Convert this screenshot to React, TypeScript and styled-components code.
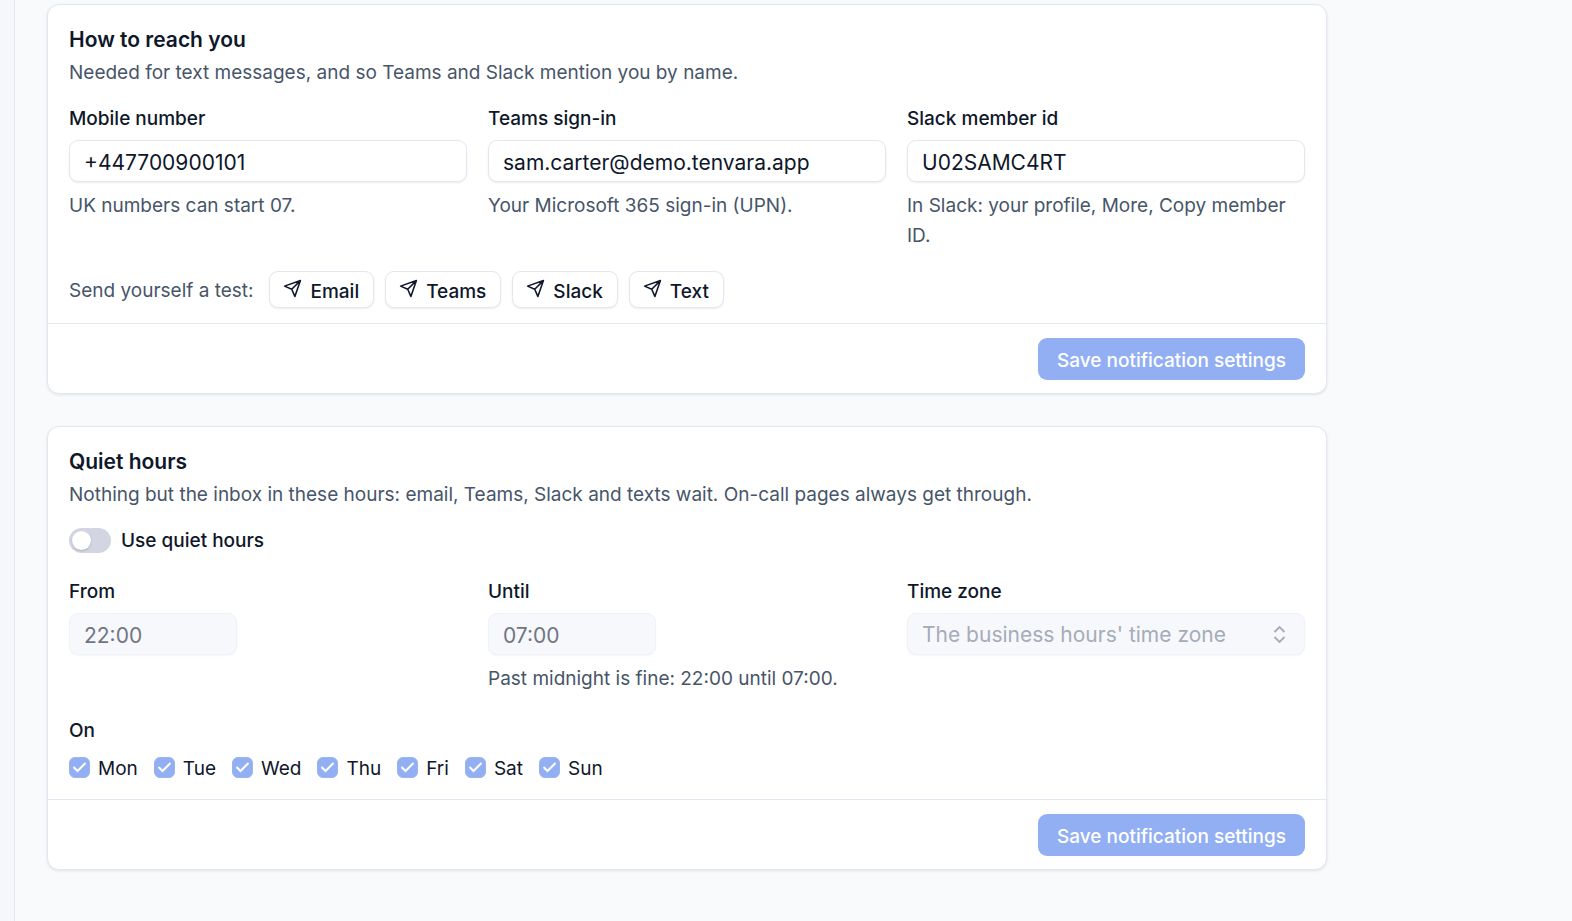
import React, { useState } from "react";
import styled, { createGlobalStyle } from "styled-components";

const GlobalStyle = createGlobalStyle`
  *, *::before, *::after { box-sizing: border-box; }
  body {
    margin: 0;
    background: #f8fafc;
    color: #0f172a;
    font-family: Inter, "Liberation Sans", sans-serif;
    font-size: 19px;
    line-height: 30px;
  }
  button, input, select { font: inherit; color: inherit; }
`;

const Shell = styled.div`
  display: grid;
  grid-template-columns: 15px minmax(0, 1fr);
  min-height: 100vh;
`;

const Sidebar = styled.aside`
  background: #f6f7fc;
  border-right: 1px solid #e2e8f0;
`;

const Main = styled.main`
  display: flex;
  flex-direction: column;
  gap: 32px;
  width: 100%;
  max-width: 1344px;
  padding: 4px 32px 32px;
`;

const Card = styled.form`
  background: #fff;
  border: 1px solid #e2e8f0;
  border-radius: 12px;
  box-shadow: 0 1px 3px rgba(15, 23, 42, 0.1);
`;

const CardBody = styled.div`
  padding: 21px 21px 15px;
`;

const CardTitle = styled.h2`
  margin: 0 0 4px;
  font-size: 21px;
  line-height: 28px;
  font-weight: 600;
`;

const Muted = styled.p`
  margin: 0;
  color: #475569;
`;

const Hint = styled(Muted)`
  margin-top: 9px;
`;

const Fields = styled.div<{ $roomy?: boolean }>`
  display: grid;
  grid-template-columns: repeat(3, minmax(0, 1fr));
  gap: 21px;
  margin: ${(p) => (p.$roomy ? "21px 0 23px" : "16px 0 20px")};
`;

const Field = styled.div`
  display: flex;
  flex-direction: column;
`;

const Label = styled.label`
  margin-bottom: 6px;
  font-weight: 500;
`;

const TextInput = styled.input<{ $short?: boolean }>`
  width: ${(p) => (p.$short ? "168px" : "100%")};
  height: 42px;
  padding: 2px 14px 0;
  font-size: 21px;
  background: #fff;
  border: 1px solid #e2e8f0;
  border-radius: 9px;
  box-shadow: 0 1px 2px rgba(15, 23, 42, 0.08);
  &:disabled {
    color: #6f7682;
    background: #f7f8fc;
    border-color: #eff2f8;
    box-shadow: 0 1px 2px rgba(15, 23, 42, 0.04);
  }
`;

const SelectWrap = styled.div`
  display: grid;
  align-items: center;
  > * { grid-area: 1 / 1; }
  > svg { justify-self: end; margin-right: 15px; pointer-events: none; }
`;

const Select = styled.select`
  appearance: none;
  width: 100%;
  height: 42px;
  padding: 2px 42px 0 14px;
  font-size: 21px;
  background: #f7f8fc;
  border: 1px solid #eff2f8;
  border-radius: 9px;
  box-shadow: 0 1px 2px rgba(15, 23, 42, 0.04);
  &:disabled { color: #a5acb8; opacity: 1; }
`;

const TestRow = styled.div`
  display: flex;
  flex-wrap: wrap;
  align-items: center;
  gap: 11px;
`;

const TestPrompt = styled(Muted)`
  padding: 2px 5px 0 0;
`;

const TestButton = styled.button`
  display: inline-flex;
  align-items: center;
  gap: 8px;
  height: 37px;
  padding: 4px 14px 0 13px;
  font-weight: 500;
  background: #fff;
  border: 1px solid #e2e8f0;
  border-radius: 9px;
  box-shadow: 0 1px 2px rgba(15, 23, 42, 0.08);
  > svg { margin-bottom: 6px; }
`;

const CardFooter = styled.footer`
  display: flex;
  justify-content: flex-end;
  padding: 14px 21px 13px;
  border-top: 1px solid #e2e8f0;
`;

const SaveButton = styled.button`
  height: 42px;
  padding: 4px 19px 0;
  font-weight: 500;
  color: #fff;
  background: #92aff4;
  border: 0;
  border-radius: 9px;
`;

const ToggleRow = styled.label`
  display: flex;
  align-items: center;
  gap: 10px;
  margin-top: 16px;
  font-weight: 500;
`;

const Toggle = styled.input`
  appearance: none;
  display: flex;
  align-items: center;
  width: 42px;
  height: 25px;
  margin: 0 0 2px;
  padding: 0 3px;
  border-radius: 13px;
  background: #d3d6e2;
  &::before {
    content: "";
    width: 19px;
    height: 19px;
    border-radius: 50%;
    background: #fff;
    box-shadow: 0 1px 2px rgba(15, 23, 42, 0.2);
  }
  &:checked { justify-content: flex-end; background: #2563eb; }
`;

const Days = styled.fieldset`
  margin: 0;
  padding: 0;
  border: 0;
`;

const DaysLegend = styled.legend`
  padding: 0 0 9px;
  font-weight: 500;
  line-height: 28px;
`;

const DayList = styled.div`
  display: flex;
  flex-wrap: wrap;
  gap: 16px;
`;

const Day = styled.label`
  display: flex;
  align-items: center;
  gap: 8px;
`;

const CheckWrap = styled.span`
  display: grid;
  margin-bottom: 4px;
  > * { grid-area: 1 / 1; }
  > svg { place-self: center; pointer-events: none; }
`;

const Checkbox = styled.input`
  appearance: none;
  width: 21px;
  height: 21px;
  margin: 0;
  border: 1px solid #9cb3ee;
  border-radius: 6px;
  background: #92aff4;
`;

const SendIcon = () => (
  <svg width="19" height="19" viewBox="0 0 24 24" fill="none" stroke="currentColor" strokeWidth="2" strokeLinecap="round" strokeLinejoin="round" aria-hidden="true">
    <path d="M22 2 11 13M22 2l-7 20-4-9-9-4Z" />
  </svg>
);

const CheckIcon = () => (
  <svg width="15" height="15" viewBox="0 0 15 15" fill="none" stroke="#fff" strokeWidth="2" aria-hidden="true">
    <path d="M1.5 7 5.5 11 13.5 3" />
  </svg>
);

const ChevronsIcon = () => (
  <svg width="21" height="21" viewBox="0 0 21 21" fill="none" stroke="#a5acb8" strokeWidth="1.8" aria-hidden="true">
    <path d="M5.5 8 10.5 3 15.5 8M5.5 13 10.5 18 15.5 13" />
  </svg>
);

const contacts = [
  { id: "mobile", label: "Mobile number", value: "+447700900101", hint: "UK numbers can start 07." },
  { id: "teams", label: "Teams sign-in", value: "sam.carter@demo.tenvara.app", hint: "Your Microsoft 365 sign-in (UPN)." },
  { id: "slack", label: "Slack member id", value: "U02SAMC4RT", hint: "In Slack: your profile, More, Copy member ID." },
];
const channels = ["Email", "Teams", "Slack", "Text"];
const days = ["Mon", "Tue", "Wed", "Thu", "Fri", "Sat", "Sun"];

export default function App() {
  const [quiet, setQuiet] = useState(false);
  return (
    <>
      <GlobalStyle />
      <Shell>
        <Sidebar />
        <Main>
          <Card>
            <CardBody>
              <CardTitle>How to reach you</CardTitle>
              <Muted>Needed for text messages, and so Teams and Slack mention you by name.</Muted>
              <Fields>
                {contacts.map((c) => (
                  <Field key={c.id}>
                    <Label htmlFor={c.id}>{c.label}</Label>
                    <TextInput id={c.id} defaultValue={c.value} />
                    <Hint>{c.hint}</Hint>
                  </Field>
                ))}
              </Fields>
              <TestRow>
                <TestPrompt as="span">Send yourself a test:</TestPrompt>
                {channels.map((c) => (
                  <TestButton type="button" key={c}>
                    <SendIcon />
                    {c}
                  </TestButton>
                ))}
              </TestRow>
            </CardBody>
            <CardFooter>
              <SaveButton disabled>Save notification settings</SaveButton>
            </CardFooter>
          </Card>
          <Card>
            <CardBody>
              <CardTitle>Quiet hours</CardTitle>
              <Muted>Nothing but the inbox in these hours: email, Teams, Slack and texts wait. On-call pages always get through.</Muted>
              <ToggleRow>
                <Toggle type="checkbox" role="switch" checked={quiet} onChange={(e) => setQuiet(e.target.checked)} />
                Use quiet hours
              </ToggleRow>
              <Fields $roomy>
                <Field>
                  <Label htmlFor="from">From</Label>
                  <TextInput id="from" $short defaultValue="22:00" disabled={!quiet} />
                </Field>
                <Field>
                  <Label htmlFor="until">Until</Label>
                  <TextInput id="until" $short defaultValue="07:00" disabled={!quiet} />
                  <Hint>Past midnight is fine: 22:00 until 07:00.</Hint>
                </Field>
                <Field>
                  <Label htmlFor="zone">Time zone</Label>
                  <SelectWrap>
                    <Select id="zone" disabled={!quiet}>
                      <option>The business hours' time zone</option>
                    </Select>
                    <ChevronsIcon />
                  </SelectWrap>
                </Field>
              </Fields>
              <Days disabled={!quiet}>
                <DaysLegend>On</DaysLegend>
                <DayList>
                  {days.map((d) => (
                    <Day key={d}>
                      <CheckWrap>
                        <Checkbox type="checkbox" defaultChecked />
                        <CheckIcon />
                      </CheckWrap>
                      {d}
                    </Day>
                  ))}
                </DayList>
              </Days>
            </CardBody>
            <CardFooter>
              <SaveButton disabled>Save notification settings</SaveButton>
            </CardFooter>
          </Card>
        </Main>
      </Shell>
    </>
  );
}
